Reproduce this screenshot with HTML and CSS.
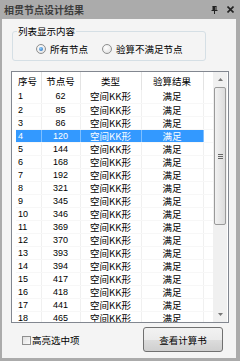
FILE: index.html
```html
<!DOCTYPE html>
<html>
<head>
    <meta charset="UTF-8">
    <title>相贯节点设计结果</title>
    <link rel="stylesheet" href="styles.css">
</head>
<body>
    <div class="win">
        <div class="title">
            <span class="title-text">相贯节点设计结果</span>
            <span class="title-btns">
                <svg width="7" height="8" viewBox="0 0 7 8"><path d="M1.5 0.5h4M2 0.5v4M5 0.5v4M0.5 4.5h6M3.5 4.5v3.5" stroke="#222" stroke-width="1" fill="none"/><rect x="2" y="1" width="2" height="3.5" fill="#222"/></svg>
                <svg width="7" height="7" viewBox="0 0 7 7"><path d="M0.5 0.5l6 6M6.5 0.5l-6 6" stroke="#222" stroke-width="1.6"/></svg>
            </span>
        </div>
        <div class="body">
            <fieldset class="group">
                <legend>列表显示内容</legend>
                <div class="radios">
                    <label class="radio"><span class="dot on"></span>所有节点</label>
                    <label class="radio"><span class="dot"></span>验算不满足节点</label>
                </div>
            </fieldset>
            <div class="list">
                <div class="grid">
                    <table>
                        <thead>
                            <tr><th class="c1">序号</th><th class="c2">节点号</th><th class="c3">类型</th><th class="c4">验算结果</th><th class="c5"></th></tr>
                        </thead>
                        <tbody id="rows"></tbody>
                    </table>
                </div>
                <div class="scroll">
                    <div class="arrow"><svg width="5" height="3" viewBox="0 0 5 3"><path d="M0 3L2.5 0L5 3z" fill="#777"/></svg></div>
                    <div class="track">
                        <div class="thumb"><span class="grip"></span></div>
                    </div>
                    <div class="arrow"><svg width="5" height="3" viewBox="0 0 5 3"><path d="M0 0L2.5 3L5 0z" fill="#777"/></svg></div>
                </div>
            </div>
            <div class="foot">
                <label class="check"><span class="box"></span>高亮选中项</label>
                <button class="btn">查看计算书</button>
            </div>
        </div>
    </div>
    <script>
        var nodes = [62, 85, 86, 120, 144, 168, 192, 321, 345, 346, 369, 370, 393, 394, 417, 418, 441, 465];
        var html = '';
        nodes.forEach(function(n, i){
            html += '<tr' + (i === 3 ? ' class="sel"' : '') + '><td class="c1">' + (i + 1) + '</td><td class="c2">' + n +
                '</td><td class="c3">空间KK形</td><td class="c4">满足</td><td class="c5"></td></tr>';
        });
        document.getElementById('rows').innerHTML = html;
    </script>
</body>
</html>
```

FILE: styles.css
```css
:root {
    --frame: #ababab;
    --panel: #f4f4f4;
    --cjk: "Noto Sans CJK SC", "Liberation Sans", sans-serif;
    --num: "Liberation Sans", "DejaVu Sans", sans-serif;
}
body {
    margin: 0;
    background: var(--panel);
}
.win {
    width: 240px;
    height: 361px;
    display: flex;
    flex-direction: column;
}
.title {
    height: 19px;
    flex: none;
    background: var(--frame);
    display: flex;
    align-items: center;
    padding: 0 6px 0 4px;
}
.title-text {
    flex: 1;
    font: bold 10px/12px var(--cjk);
    color: #3c3c3c;
}
.title-btns {
    display: flex;
    align-items: center;
    gap: 9px;
}
.body {
    flex: 1;
    background: var(--panel);
    border-left: 2px solid var(--frame);
    border-right: 4px solid var(--frame);
    border-bottom: 3px solid var(--frame);
    display: flex;
    flex-direction: column;
    font: 9.5px/12px var(--cjk);
    color: #000;
}

/* 分组框 */
.group {
    margin: 6px 30px 0 10px;
    padding: 0 0 0 4px;
    border: 1px solid #d5dfe5;
    border-radius: 3px;
}
.group legend {
    padding: 0 1px;
    line-height: 12px;
}
.radios {
    display: flex;
    align-items: center;
    padding: 6px 0 6px 19px;
    height: 11px;
}
.radio {
    display: flex;
    align-items: center;
    gap: 4px;
    margin-right: 14px;
}
.dot {
    width: 8px;
    height: 8px;
    border: 1px solid #8e8f8f;
    border-radius: 50%;
    background: radial-gradient(circle at 40% 35%, #fff, #dcdcdc);
    position: relative;
}
.dot.on::after {
    content: "";
    position: absolute;
    left: 2px;
    top: 2px;
    width: 4px;
    height: 4px;
    border-radius: 50%;
    background: radial-gradient(circle at 40% 35%, #8fd0ff, #1b5fb0);
}

/* 列表 */
.list {
    margin: 10px 0 0 9px;
    width: 216px;
    height: 250px;
    border: 1px solid #828790;
    background: #fff;
    display: flex;
    overflow: hidden;
}
.grid {
    padding-left: 4px;
    width: 197px;
    overflow: hidden;
}
table {
    border-collapse: collapse;
    table-layout: fixed;
    width: 197px;
}
th {
    height: 18px;
    padding: 0;
    font-weight: normal;
    text-align: center;
    border-right: 1px solid #e3e3e3;
    box-sizing: border-box;
}
td {
    height: 13px;
    padding: 0;
    text-align: center;
    border-right: 1px solid #f0f0f0;
    border-bottom: 1px solid #f7f7f7;
    box-sizing: border-box;
    white-space: nowrap;
}
.c1 { width: 25px; text-align: left; padding-left: 2px; }
.c2 { width: 39px; }
.c3 { width: 61px; }
.c4 { width: 62px; }
.c5 { width: 10px; border-right: none; }
td.c1, td.c2 {
    font: 9px/12px var(--num);
}
tr.sel td {
    background: #3399ff;
    color: #fff;
    border-right-color: #7fbfff;
}
tr.sel td.c5 {
    background: #fff;
}

/* 滚动条 */
.scroll {
    width: 14px;
    display: flex;
    flex-direction: column;
    background: #f0f0f0;
}
.arrow {
    height: 15px;
    display: flex;
    align-items: center;
    justify-content: center;
}
.track {
    flex: 1;
    padding-top: 0;
}
.thumb {
    margin: 0 1px;
    height: 136px;
    border: 1px solid #9a9a9a;
    border-radius: 2px;
    background: linear-gradient(to right, #f2f2f2, #dcdcdc);
    display: flex;
    align-items: center;
    justify-content: center;
}
.grip {
    width: 5px;
    height: 5px;
    background: repeating-linear-gradient(#666 0 1px, transparent 1px 2px);
}

/* 底部 */
.foot {
    flex: 1;
    display: flex;
    align-items: flex-start;
    padding: 4px 13px 0 20px;
}
.check {
    display: flex;
    align-items: center;
    gap: 1px;
    margin-top: 7px;
}
.box {
    width: 7px;
    height: 7px;
    border: 1px solid #8f8f8f;
    background: linear-gradient(135deg, #e0e0e0, #fafafa);
}
.btn {
    margin-left: auto;
    width: 80px;
    height: 25px;
    padding: 0;
    border: 1px solid #707070;
    border-radius: 3px;
    background: linear-gradient(#f2f2f2 0, #ebebeb 50%, #dddddd 50%, #cfcfcf 100%);
    font: 9.5px/12px var(--cjk);
    color: #000;
}
```
